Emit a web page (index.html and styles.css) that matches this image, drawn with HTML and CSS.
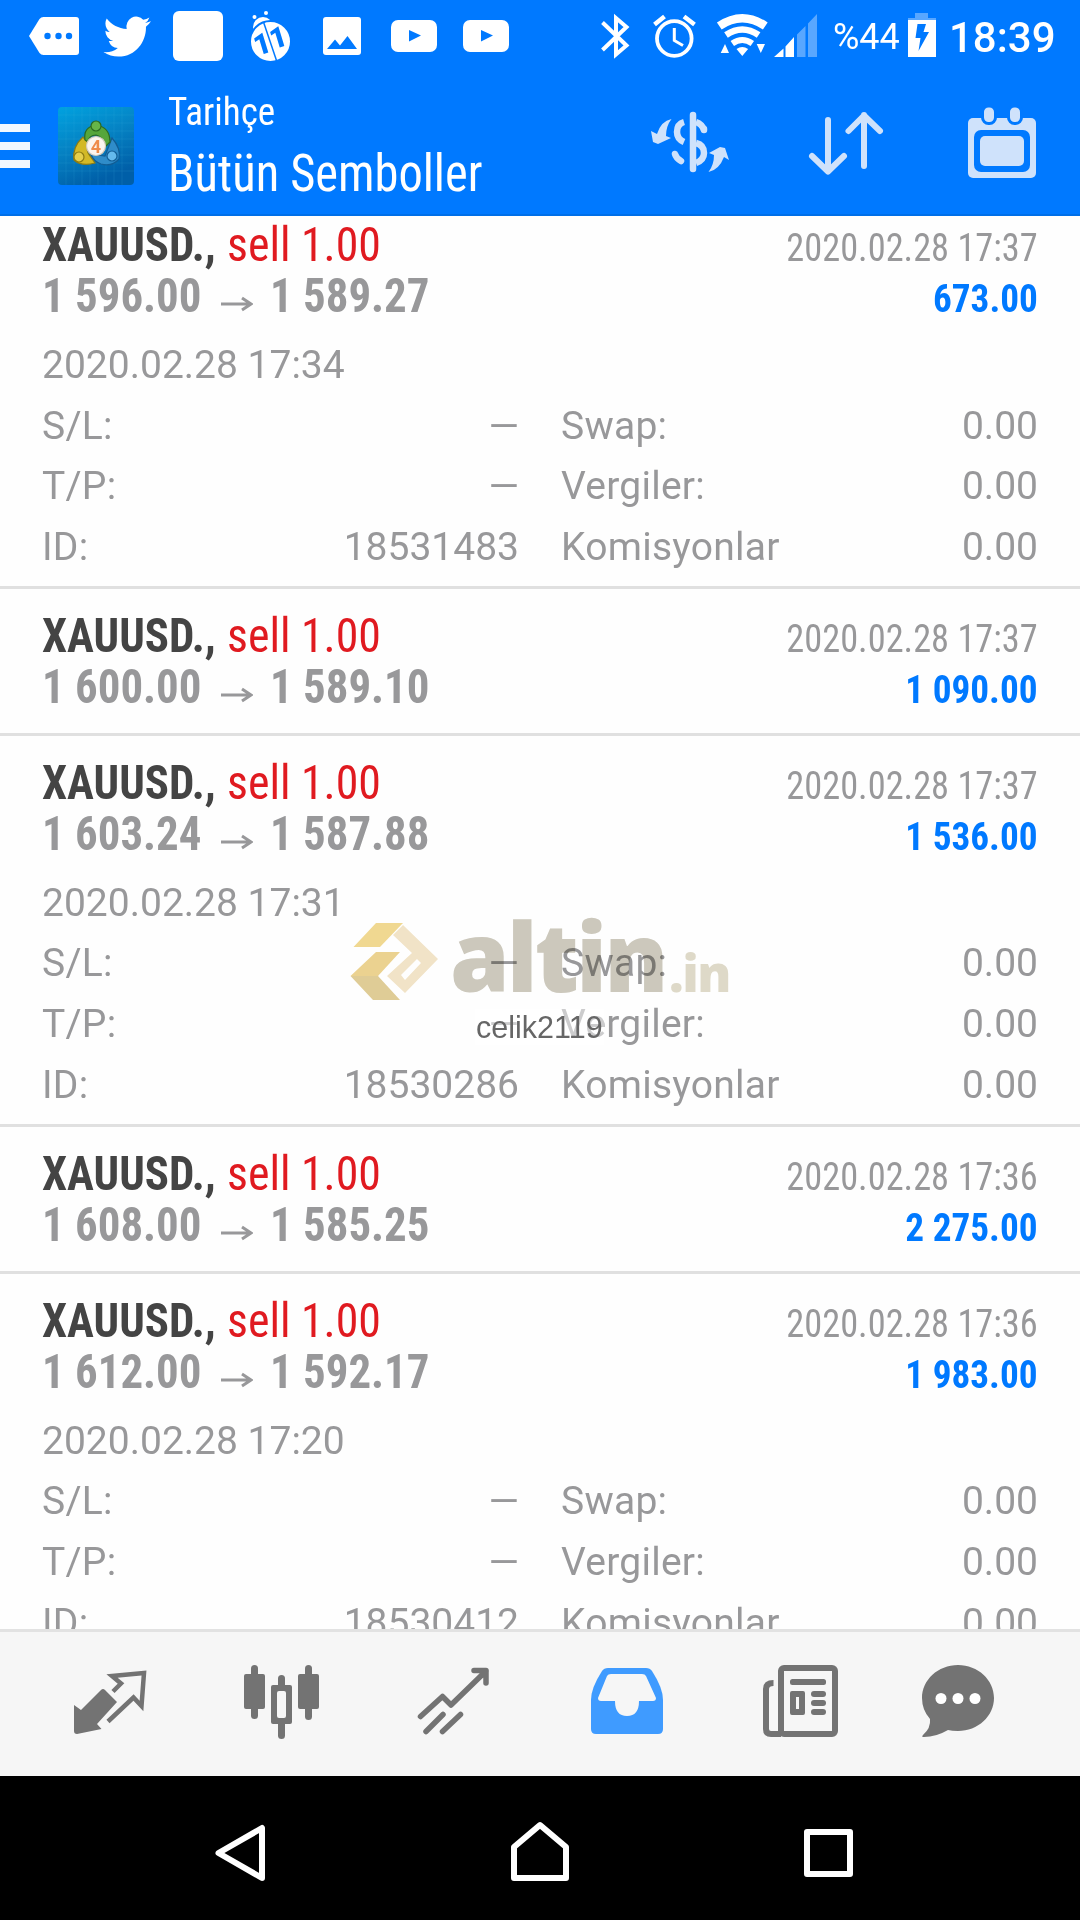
FILE: index.html
```
<!DOCTYPE html>
<html lang="tr">
<head>
  <meta charset="UTF-8">
  <title>Tarihçe</title>
  <link rel="stylesheet" href="styles.css">
</head>
<body>
  <div class="statusbar">
    <div class="notifications">
      <svg viewBox="18 0 72 72"><path fill="#fff" d="M29 36L39.500 19Q41 17 43.500 17H76Q79 17 79 20V52Q79 55 76 55H43.500Q41 55 39.500 53Z"/><g fill="#0079ff"><circle cx="47.500" cy="36" r="3.200"/><circle cx="58.500" cy="36" r="3.200"/><circle cx="69" cy="36" r="3.200"/></g></svg>
      <svg viewBox="90 0 72 72"><path fill="#fff" transform="translate(103.500 12) scale(1.970 2.050)" d="M23.953 4.570a10 10 0 01-2.825.775 4.958 4.958 0 002.163-2.723c-.951.555-2.005.959-3.127 1.184a4.920 4.920 0 00-8.384 4.482C7.690 8.095 4.067 6.130 1.640 3.162a4.822 4.822 0 00-.666 2.475c0 1.710.870 3.213 2.188 4.096a4.904 4.904 0 01-2.228-.616v.060a4.923 4.923 0 003.946 4.827 4.996 4.996 0 01-2.212.085 4.936 4.936 0 004.604 3.417 9.867 9.867 0 01-6.102 2.105c-.390 0-.779-.023-1.170-.067a13.995 13.995 0 007.557 2.209c9.053 0 13.998-7.496 13.998-13.985 0-.210 0-.420-.015-.630A9.935 9.935 0 0024 4.590z"/></svg>
      <svg viewBox="162 0 72 72"><rect x="173" y="11" width="50" height="50" rx="6" fill="#fff"/></svg>
      <svg viewBox="234 0 72 72"><g fill="#fff"><circle cx="254.500" cy="17" r="2"/><circle cx="266" cy="13" r="2"/><circle cx="263" cy="27" r="10"/><circle cx="270.500" cy="41.500" r="20.500" stroke="#0079ff" stroke-width="2"/></g><path stroke="#0079ff" stroke-width="1.500" d="M263.500 22L277 62"/><g class="bug-digits"><text transform="translate(257 56) rotate(-17)">1</text><text transform="translate(273 49.500) rotate(-17)">1</text></g></svg>
      <svg viewBox="306 0 72 72"><rect x="323" y="17" width="38" height="38" rx="3" fill="#fff"/><path fill="#0079ff" d="M327 49L335 39.500L340 45.500L347.500 36L357 49Z"/></svg>
      <svg viewBox="378 0 72 72"><rect x="391" y="20" width="46" height="32" rx="7" fill="#fff"/><path fill="#0079ff" d="M409 30L421 35.500L409 41.500Z"/></svg>
      <svg viewBox="450 0 72 72"><rect x="463" y="20" width="46" height="32" rx="7" fill="#fff"/><path fill="#0079ff" d="M481 30L493 35.500L481 41.500Z"/></svg>
    </div>
    <div class="system">
      <svg class="system-icons" viewBox="590 0 232 72">
        <!-- bluetooth -->
        <path class="line" stroke-width="4" d="M602.500 22.500L626.500 45.500L616 54.500V18L626.500 27L602.500 50"/>
        <!-- alarm -->
        <g class="line" stroke-width="3.800"><circle cx="674.300" cy="38.500" r="17.300"/><path stroke-width="3" d="M674.300 28V40.500L683 45.500"/><path stroke-width="4.500" d="M654.500 24.500L664.500 16.500M684 16.500L694.500 24.500"/></g>
        <!-- wifi -->
        <g class="line"><path stroke-width="8.500" d="M719.300 26Q742.300 10.500 765.300 26"/><path stroke-width="6.500" d="M726 35Q742.300 24 758.600 35"/><path stroke-width="6" d="M732.300 43.500Q742.300 36.500 752.300 43.500"/></g>
        <path fill="#fff" d="M736.500 49Q742.300 45 748.100 49L742.300 56ZM720.700 53L725 44L729 53ZM756.700 44H765L760.800 53Z"/>
        <!-- signal -->
        <path fill="#fff" d="M774 57L783.500 48.500V57ZM785.500 46.500L794 37V57H785.500Z"/>
        <path fill="#fff" opacity=".35" d="M797 34.500L805.500 26V57H797ZM808 23.500L817 14V57H808Z"/>
      </svg>
      <span class="percent">%44</span>
      <svg class="battery" viewBox="904 0 36 72"><path fill="#fff" opacity=".35" d="M915 13H928V18H936V20H908V18H915Z"/><path fill="#fff" d="M908 20H936V57H908Z"/><path fill="#0079ff" d="M917.500 24H926L923.500 32H929L918.500 51L920.500 38H915.500Z"/></svg>
      <span class="clock">18:39</span>
    </div>
  </div>

  <div class="header">
    <svg class="menu" viewBox="0 72 30 144"><path fill="#f2f8ff" d="M0 124H30V132H0ZM0 142H30V150H0ZM0 160H30V168H0Z"/></svg>
    <svg class="app-icon" viewBox="0 0 76 78">
      <defs>
        <linearGradient id="tile" x2=".4" y2="1"><stop offset="0" stop-color="#00a2e0"/><stop offset=".5" stop-color="#0583c4"/><stop offset="1" stop-color="#005fa8"/></linearGradient>
      </defs>
      <rect width="76" height="78" rx="4" fill="url(#tile)"/>
      <path stroke="#49b5e5" stroke-opacity=".14" d="M8 0V78M16 0V78M24 0V78M32 0V78M40 0V78M48 0V78M56 0V78M64 0V78M0 8H76M0 16H76M0 24H76M0 32H76M0 40H76M0 48H76M0 56H76M0 64H76"/>
      <g stroke-width="1.200">
        <path fill="#2f8cc9" stroke="#125d94" d="M54 31Q63 41 61 52Q54 60 43 57Q35 54 33 47L47 49Z"/>
        <path fill="#d3b927" stroke="#8d7b12" d="M25 30Q14 40 16 53Q24 60 37 56L32 49Q27 43 31 37Z"/>
        <path fill="#56a63b" stroke="#2c6a21" d="M27 33Q25 20 38 18Q52 20 52 35L47 40Q45 29 38 28Q31 28 30 35Z"/>
        <circle cx="38" cy="19" r="5" fill="#66b548" stroke="#2c6a21"/>
        <circle cx="21" cy="50" r="5" fill="#e5cf4b" stroke="#8d7b12"/>
        <circle cx="54" cy="49" r="5" fill="#65b9ec" stroke="#125d94"/>
        <circle cx="38" cy="39" r="9.500" fill="#fbf5ef" stroke="#d3cabc"/>
      </g>
      <text class="app-digit" x="38" y="45.500">4</text>
    </svg>
    <div class="titles">
      <div class="title-small">Tarihçe</div>
      <div class="title-big">Bütün Semboller</div>
    </div>
    <div class="actions">
      <svg class="currency" viewBox="640 72 110 144">
        <g fill="none" stroke="#cfe2fb" stroke-width="6.500">
          <path stroke-linecap="round" d="M693 115V169"/>
          <path d="M684 122Q677 124 677 132Q677 139 684 142M696 122Q702 124 704 130M696 143Q704 145 704 153Q704 160 696 163"/>
          <path stroke-linecap="round" d="M704 129V130M675 154Q676 158 681 161"/>
        </g>
        <path fill="#cfe2fb" d="M671.500 119Q666 126 666 136L671 138L658 144L653 142L651 131L657 134Q661 121 671.500 119ZM708.500 172Q714 165 714 155L709 153L720 147L725 148L729 160L724 157Q719 170 708.500 172Z"/>
      </svg>
      <svg class="sort" viewBox="800 72 92 144"><path fill="none" stroke="#cfe2fb" stroke-width="6" stroke-linecap="round" stroke-linejoin="round" d="M828 120V171M812 156L828 171.500L844 156M864 166V115M848.500 131L864 115.500L880 131"/></svg>
      <svg class="calendar" viewBox="960 72 84 144">
        <rect x="968" y="118" width="68" height="60" rx="5" fill="#cfe2fb"/>
        <rect x="974" y="130" width="56" height="42" rx="7" fill="#0079ff"/>
        <rect x="980" y="136" width="44" height="30" rx="5" fill="#cfe2fb"/>
        <g fill="#cfe2fb" stroke="#0079ff" stroke-width="3"><rect x="982.500" y="106" width="13" height="17.500" rx="6"/><rect x="1008.500" y="106" width="13" height="17.500" rx="6"/></g>
      </svg>
    </div>
  </div>

  <div class="history">
    <div class="deal">
      <div class="line1"><span class="symbol">XAUUSD.,</span><span class="side">sell 1.00</span><span class="time">2020.02.28 17:37</span></div>
      <div class="line2"><span class="price">1 596.00</span><svg class="arrow" viewBox="0 0 32 16"><path d="M0 8H30M21 2L30 8L21 14"/></svg><span class="price">1 589.27</span><span class="profit">673.00</span></div>
      <div class="details">
        <div class="opened">2020.02.28 17:34</div>
        <div class="pair"><span class="label">S/L:</span><span>—</span></div><div class="pair"><span class="label">Swap:</span><span>0.00</span></div>
        <div class="pair"><span class="label">T/P:</span><span>—</span></div><div class="pair"><span class="label">Vergiler:</span><span>0.00</span></div>
        <div class="pair"><span class="label">ID:</span><span>18531483</span></div><div class="pair"><span class="label">Komisyonlar</span><span>0.00</span></div>
      </div>
    </div>
    <div class="deal">
      <div class="line1"><span class="symbol">XAUUSD.,</span><span class="side">sell 1.00</span><span class="time">2020.02.28 17:37</span></div>
      <div class="line2"><span class="price">1 600.00</span><svg class="arrow" viewBox="0 0 32 16"><path d="M0 8H30M21 2L30 8L21 14"/></svg><span class="price">1 589.10</span><span class="profit">1 090.00</span></div>
    </div>
    <div class="deal">
      <div class="line1"><span class="symbol">XAUUSD.,</span><span class="side">sell 1.00</span><span class="time">2020.02.28 17:37</span></div>
      <div class="line2"><span class="price">1 603.24</span><svg class="arrow" viewBox="0 0 32 16"><path d="M0 8H30M21 2L30 8L21 14"/></svg><span class="price">1 587.88</span><span class="profit">1 536.00</span></div>
      <div class="details">
        <div class="opened">2020.02.28 17:31</div>
        <div class="pair"><span class="label">S/L:</span><span>—</span></div><div class="pair"><span class="label">Swap:</span><span>0.00</span></div>
        <div class="pair"><span class="label">T/P:</span><span>—</span></div><div class="pair"><span class="label">Vergiler:</span><span>0.00</span></div>
        <div class="pair"><span class="label">ID:</span><span>18530286</span></div><div class="pair"><span class="label">Komisyonlar</span><span>0.00</span></div>
      </div>
    </div>
    <div class="deal">
      <div class="line1"><span class="symbol">XAUUSD.,</span><span class="side">sell 1.00</span><span class="time">2020.02.28 17:36</span></div>
      <div class="line2"><span class="price">1 608.00</span><svg class="arrow" viewBox="0 0 32 16"><path d="M0 8H30M21 2L30 8L21 14"/></svg><span class="price">1 585.25</span><span class="profit">2 275.00</span></div>
    </div>
    <div class="deal">
      <div class="line1"><span class="symbol">XAUUSD.,</span><span class="side">sell 1.00</span><span class="time">2020.02.28 17:36</span></div>
      <div class="line2"><span class="price">1 612.00</span><svg class="arrow" viewBox="0 0 32 16"><path d="M0 8H30M21 2L30 8L21 14"/></svg><span class="price">1 592.17</span><span class="profit">1 983.00</span></div>
      <div class="details">
        <div class="opened">2020.02.28 17:20</div>
        <div class="pair"><span class="label">S/L:</span><span>—</span></div><div class="pair"><span class="label">Swap:</span><span>0.00</span></div>
        <div class="pair"><span class="label">T/P:</span><span>—</span></div><div class="pair"><span class="label">Vergiler:</span><span>0.00</span></div>
        <div class="pair"><span class="label">ID:</span><span>18530412</span></div><div class="pair"><span class="label">Komisyonlar</span><span>0.00</span></div>
      </div>
    </div>
  </div>

  <div class="tabs">
    <svg class="tab-quotes" viewBox="70 1632 80 144"><path fill="#737373" d="M74 1705L81 1710L101 1690Q103 1688 105 1690L117 1702L97 1724L101.500 1729L77 1734Q74 1734 74 1731Z"/><path fill="none" stroke="#737373" stroke-width="4.500" d="M113 1691.500L121 1683.500L112 1676L144 1673L141.500 1706L133.500 1697.500L108 1721.500"/></svg>
    <svg class="tab-charts" viewBox="240 1632 84 144"><g fill="#737373"><rect x="244" y="1674" width="21" height="35" rx="2"/><rect x="251" y="1665" width="7" height="54" rx="3.500"/><rect x="298" y="1674" width="21" height="35" rx="2"/><rect x="305" y="1665" width="7" height="55" rx="3.500"/><rect x="271" y="1685" width="21" height="39" rx="2"/><rect x="278" y="1675" width="7" height="64" rx="3.500"/></g><rect x="277" y="1691" width="9" height="27" rx="2" fill="#f6f6f6"/></svg>
    <svg class="tab-trade" viewBox="412 1632 84 144"><path fill="none" stroke="#737373" stroke-width="5.500" stroke-linecap="round" stroke-linejoin="round" d="M420.500 1716.500L442.500 1696.500L451 1705L486 1671M474 1670.500H486V1683M426 1731.500L443 1714.500M442.500 1731.500L460.500 1714.500"/></svg>
    <svg class="tab-history" viewBox="586 1632 82 144"><path fill="#3f9bff" d="M608 1668H646Q650 1668 652 1671Q663 1688 663 1700V1729Q663 1734 658 1734H596Q591 1734 591 1729V1700Q591 1688 602 1671Q604 1668 608 1668Z"/><path fill="#f6f6f6" d="M611 1674H642Q645 1674 646 1676L656 1698Q656 1701 653 1701H639Q639 1716 627 1716Q615 1716 615 1701H601Q598 1701 598 1698L607 1676Q608 1674 611 1674Z"/></svg>
    <svg class="tab-news" viewBox="758 1632 84 144"><g fill="none" stroke="#737373" stroke-width="6"><rect x="781" y="1668" width="54" height="66" rx="3"/><path d="M773.500 1683Q766 1683 766 1689V1729Q766 1734 771 1734H781"/></g><g fill="#737373"><rect x="790" y="1679" width="36" height="6" rx="2.500"/><rect x="811" y="1691" width="15" height="6" rx="3"/><rect x="811" y="1700" width="15" height="6" rx="3"/><rect x="811" y="1709" width="15" height="6" rx="3"/><path d="M792 1691H803Q805 1691 805 1693V1713Q805 1715 803 1715H792Q790 1715 790 1713V1693Q790 1691 792 1691ZM796 1697V1709H799V1697Z"/></g></svg>
    <svg class="tab-chat" viewBox="918 1632 80 144"><path fill="#737373" d="M958 1665C978 1665 994 1680 994 1698S978 1731 958 1731Q952 1731 948 1730Q936 1737 924 1737Q921 1737 923 1735Q931 1728 930 1719Q922 1710 922 1698C922 1680 938 1665 958 1665Z"/><g fill="#fff"><circle cx="941" cy="1698.500" r="5.500"/><circle cx="958" cy="1698.500" r="5.500"/><circle cx="975" cy="1698.500" r="5.500"/></g></svg>
  </div>

  <div class="navbar">
    <svg viewBox="210 1776 60 144"><path d="M218.500 1853L262 1828V1878Z"/></svg>
    <svg viewBox="510 1776 60 144"><path d="M514 1878V1847L540 1825L566 1847V1878Z"/></svg>
    <svg class="recents" viewBox="798 1776 60 144"><path d="M807 1832H850V1874H807Z"/></svg>
  </div>

  <!-- watermark over the list -->
  <div class="watermark">
    <svg class="mark" viewBox="350 920 90 84"><path fill="#f1d992" d="M353.500 947L376 923H403L380 947Z"/><path fill="#ecd391" d="M350.500 976L376 952H400L378 976Z"/><path fill="#e0cd97" d="M350.500 976H378L400 1000H373Z"/><path fill="#f2e4c8" fill-rule="evenodd" d="M403 925L438 959L405 993L387 976L412 953L393 935ZM401 975L405 980L421 963L417 959Z"/></svg>
    <span class="brand">altin</span><span class="brand-tld">.in</span>
  </div>
  <div class="user">celik2119</div>
</body>
</html>
```
FILE: styles.css
```
* {
  box-sizing: border-box;
}
body {
  margin: 0;
  width: 1080px;
  height: 1920px;
  overflow: hidden;
  position: relative;
  display: flex;
  flex-direction: column;
  background: #fefefe;
  font-family: Roboto, "Liberation Sans", sans-serif;
  color: #98989a;
}
svg {
  display: block;
  flex: none;
}
/* Android status bar */
.statusbar {
  height: 72px;
  flex: none;
  display: flex;
  justify-content: space-between;
  background: #0079ff;
  color: #fff;
}
.notifications {
  display: flex;
  padding-left: 18px;
}
.notifications svg {
  width: 72px;
  height: 72px;
}
.bug-digits {
  font-size: 29px;
  font-weight: 900;
  fill: #0079ff;
}
.system {
  display: flex;
  padding-right: 24px;
  line-height: 72px;
}
.system-icons {
  width: 232px;
  height: 72px;
}
.line {
  fill: none;
  stroke: #fff;
}
.percent {
  width: 82px;
  padding-left: 11px;
  font-size: 36px;
  line-height: 75px;
}
.battery {
  width: 36px;
  height: 72px;
}
.clock {
  width: 116px;
  padding-left: 9px;
  font-size: 42px;
  font-weight: 500;
  line-height: 75px;
}
/* App header */
.header {
  height: 144px;
  flex: none;
  position: relative;
  z-index: 1;
  display: flex;
  background: #0079ff;
  border-bottom: 2px solid #006fe8;
  color: #fff;
}
.menu {
  width: 30px;
  height: 144px;
}
.app-icon {
  width: 76px;
  height: 78px;
  margin: 35px 34px 0 28px;
}
.app-digit {
  font-size: 18px;
  font-weight: bold;
  text-anchor: middle;
  fill: #ef8b4a;
}
.titles {
  width: 472px;
  white-space: nowrap;
  font-family: "Roboto Condensed", Roboto, sans-serif;
  font-stretch: 75%;
  transform: scaleX(0.95);
  transform-origin: left;
}
.title-small {
  height: 56px;
  font-size: 39px;
  line-height: 80px;
}
.title-big {
  font-size: 51px;
  line-height: 91px;
}
.actions {
  display: flex;
}
.actions svg {
  height: 144px;
}
.currency {
  width: 110px;
}
.sort {
  width: 92px;
  margin-left: 50px;
}
.calendar {
  width: 84px;
  margin-left: 68px;
}
/* Deals, scrolled a little under the header */
.history {
  height: 1413px;
  flex: none;
  overflow: hidden;
}
.history .deal:first-child {
  margin-top: -18px;
}
.deal {
  padding: 21px 42px;
  border-bottom: 3px solid #e0e0e0;
}
.deal:has(.details) {
  padding-bottom: 8px;
}
.line1,
.line2 {
  height: 51px;
  display: flex;
  align-items: baseline;
  font-family: "Roboto Condensed", Roboto, sans-serif;
  font-stretch: 75%;
  font-size: 48px;
  line-height: 51px;
  white-space: nowrap;
}
/* the condensed face is a little too wide for these lines */
.symbol,
.side,
.price {
  transform: scaleX(0.935);
  transform-origin: left;
}
.symbol {
  width: 185px;
  font-weight: bold;
  color: #444;
}
.side {
  color: #e01a20;
  transform: scaleX(0.955);
}
.time,
.profit {
  margin-left: auto;
  font-size: 39px;
  transform: scaleX(0.932);
  transform-origin: right;
}
.price {
  width: 179px;
  font-weight: bold;
}
.profit {
  font-weight: bold;
  color: #0079ff;
  transform: scaleX(0.955);
}
.arrow {
  width: 32px;
  height: 16px;
  margin-right: 17px;
}
.arrow path {
  fill: none;
  stroke: #98989a;
  stroke-width: 3;
}
.details {
  display: grid;
  grid-template-columns: 1fr 1fr;
  grid-auto-rows: 60.7px;
  column-gap: 42px;
  margin-top: 14px;
  font-size: 39px;
  line-height: 61px;
}
.opened {
  grid-column: 1 / 3;
}
.pair {
  display: flex;
  justify-content: space-between;
}
.label {
  letter-spacing: 0.25px;
}
/* Bottom tabs */
.tabs {
  height: 147px;
  flex: none;
  display: flex;
  gap: 90px;
  padding-left: 70px;
  background: #f6f6f6;
  border-top: 3px solid #e2e2e2;
}
.tabs svg {
  height: 144px;
}
.tab-quotes,
.tab-chat {
  width: 80px;
}
.tab-charts,
.tab-trade,
.tab-news {
  width: 84px;
}
.tab-trade {
  margin-left: -2px;
}
.tab-history {
  width: 82px;
}
.tab-chat {
  margin-left: -14px;
}
/* Android navigation bar */
.navbar {
  height: 144px;
  flex: none;
  display: flex;
  gap: 240px;
  padding-left: 210px;
  background: #000;
}
.navbar svg {
  width: 60px;
  height: 144px;
}
.navbar .recents {
  margin-left: -12px;
}
.navbar path {
  fill: none;
  stroke: #fff;
  stroke-width: 6;
  stroke-linejoin: round;
}
/* Watermark */
.watermark {
  position: absolute;
  left: 350px;
  top: 910px;
  height: 90px;
  display: flex;
  align-items: baseline;
  mix-blend-mode: multiply;
  font-family: "Open Sans", sans-serif;
  font-weight: 800;
  line-height: 90px;
  white-space: nowrap;
}
.mark {
  width: 90px;
  height: 84px;
  align-self: flex-end;
  margin: 0 10px -4px 0;
}
.brand {
  width: 219px;
  font-size: 96px;
  letter-spacing: -3px;
  color: #cdc9bd;
}
.brand-tld {
  font-size: 51px;
  letter-spacing: -1.5px;
  color: #dfdac9;
}
.user {
  position: absolute;
  left: 475px;
  top: 1009px;
  padding: 0 1px;
  font-family: "Liberation Sans", Arial, sans-serif;
  font-size: 30.5px;
  line-height: 36px;
  color: #666;
  background: rgba(255, 255, 255, 0.5);
}
```
